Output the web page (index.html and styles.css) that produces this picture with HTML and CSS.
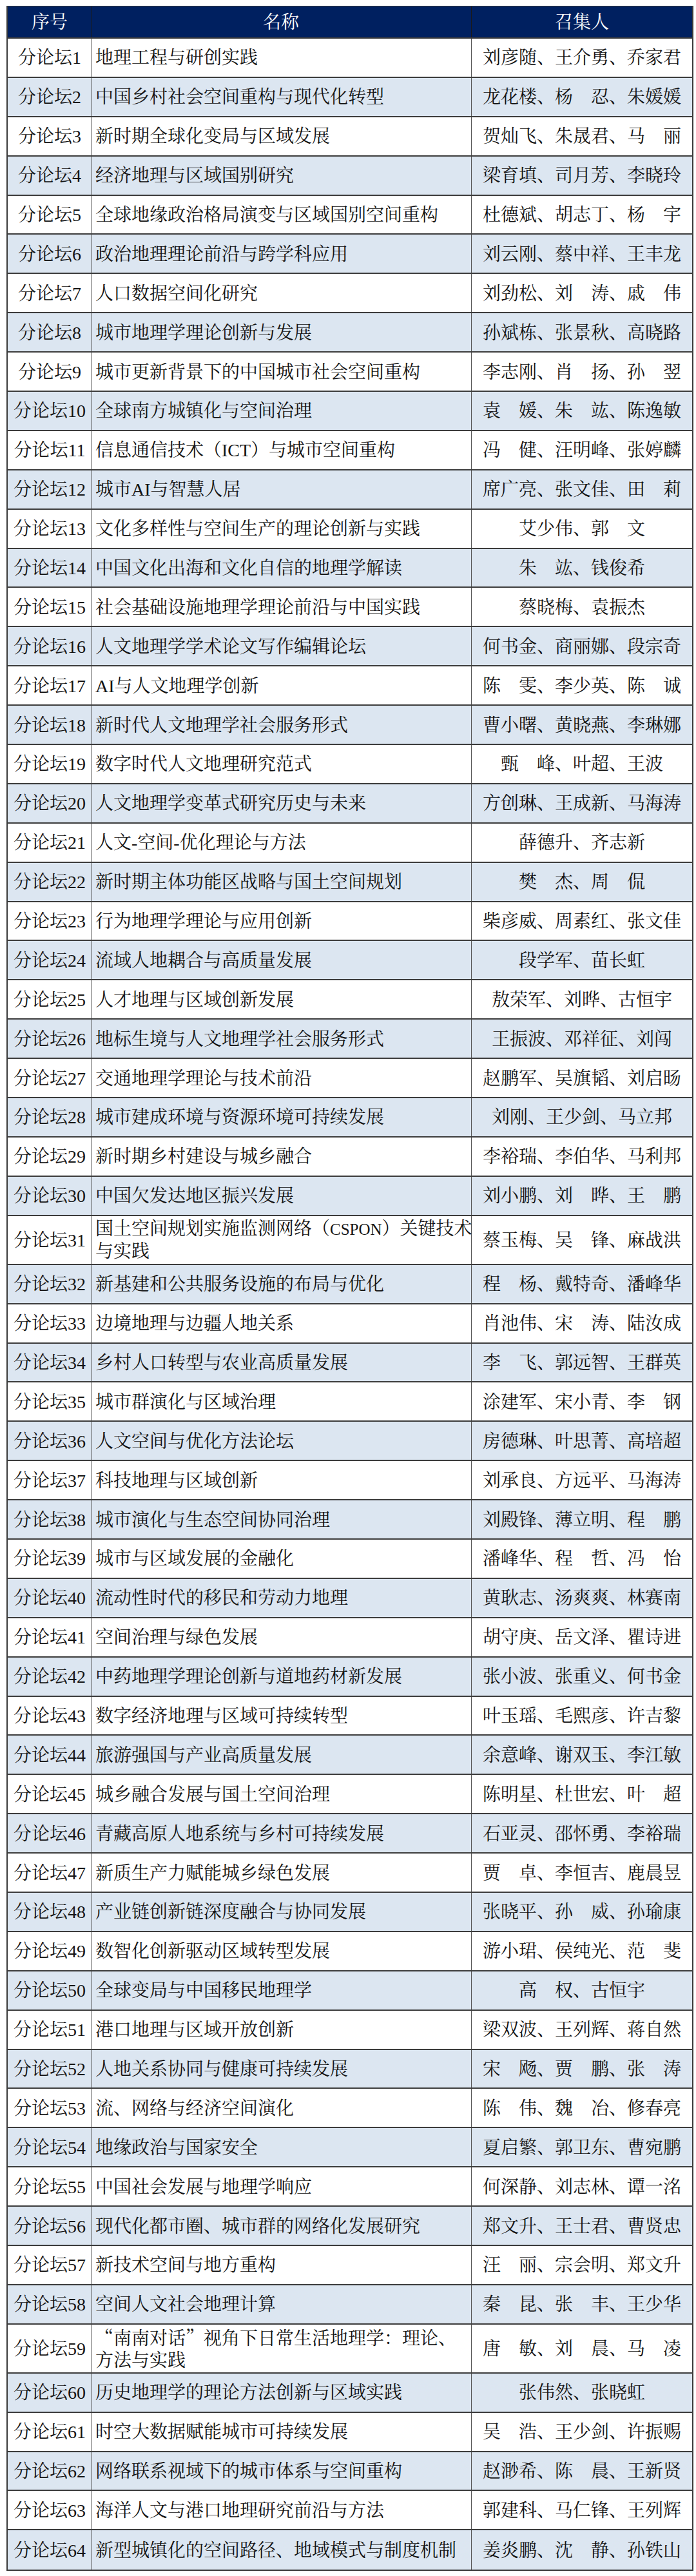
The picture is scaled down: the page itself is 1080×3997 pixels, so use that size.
FILE: index.html
```html
<!DOCTYPE html>
<html lang="zh-CN">
<head>
<meta charset="utf-8">
<title>分论坛列表</title>
<link rel="stylesheet" href="styles.css">
</head>
<body>
<div class="sheet">
  <div class="row head"><div class="c no">序号</div><div class="c name">名称</div><div class="c who">召集人</div></div>
  <div class="row"><div class="c no">分论坛1</div><div class="c name">地理工程与研创实践</div><div class="c who">刘彦随、王介勇、乔家君</div></div>
  <div class="row alt"><div class="c no">分论坛2</div><div class="c name">中国乡村社会空间重构与现代化转型</div><div class="c who">龙花楼、杨　忍、朱媛媛</div></div>
  <div class="row"><div class="c no">分论坛3</div><div class="c name">新时期全球化变局与区域发展</div><div class="c who">贺灿飞、朱晟君、马　丽</div></div>
  <div class="row alt"><div class="c no">分论坛4</div><div class="c name">经济地理与区域国别研究</div><div class="c who">梁育填、司月芳、李晓玲</div></div>
  <div class="row"><div class="c no">分论坛5</div><div class="c name">全球地缘政治格局演变与区域国别空间重构</div><div class="c who">杜德斌、胡志丁、杨　宇</div></div>
  <div class="row alt"><div class="c no">分论坛6</div><div class="c name">政治地理理论前沿与跨学科应用</div><div class="c who">刘云刚、蔡中祥、王丰龙</div></div>
  <div class="row"><div class="c no">分论坛7</div><div class="c name">人口数据空间化研究</div><div class="c who">刘劲松、刘　涛、戚　伟</div></div>
  <div class="row alt"><div class="c no">分论坛8</div><div class="c name">城市地理学理论创新与发展</div><div class="c who">孙斌栋、张景秋、高晓路</div></div>
  <div class="row"><div class="c no">分论坛9</div><div class="c name">城市更新背景下的中国城市社会空间重构</div><div class="c who">李志刚、肖　扬、孙　翌</div></div>
  <div class="row alt"><div class="c no">分论坛10</div><div class="c name">全球南方城镇化与空间治理</div><div class="c who">袁　媛、朱　竑、陈逸敏</div></div>
  <div class="row"><div class="c no">分论坛11</div><div class="c name">信息通信技术（ICT）与城市空间重构</div><div class="c who">冯　健、汪明峰、张婷麟</div></div>
  <div class="row alt"><div class="c no">分论坛12</div><div class="c name">城市AI与智慧人居</div><div class="c who">席广亮、张文佳、田　莉</div></div>
  <div class="row"><div class="c no">分论坛13</div><div class="c name">文化多样性与空间生产的理论创新与实践</div><div class="c who">艾少伟、郭　文</div></div>
  <div class="row alt"><div class="c no">分论坛14</div><div class="c name">中国文化出海和文化自信的地理学解读</div><div class="c who">朱　竑、钱俊希</div></div>
  <div class="row"><div class="c no">分论坛15</div><div class="c name">社会基础设施地理学理论前沿与中国实践</div><div class="c who">蔡晓梅、袁振杰</div></div>
  <div class="row alt"><div class="c no">分论坛16</div><div class="c name">人文地理学学术论文写作编辑论坛</div><div class="c who">何书金、商丽娜、段宗奇</div></div>
  <div class="row"><div class="c no">分论坛17</div><div class="c name">AI与人文地理学创新</div><div class="c who">陈　雯、李少英、陈　诚</div></div>
  <div class="row alt"><div class="c no">分论坛18</div><div class="c name">新时代人文地理学社会服务形式</div><div class="c who">曹小曙、黄晓燕、李琳娜</div></div>
  <div class="row"><div class="c no">分论坛19</div><div class="c name">数字时代人文地理研究范式</div><div class="c who">甄　峰、叶超、王波</div></div>
  <div class="row alt"><div class="c no">分论坛20</div><div class="c name">人文地理学变革式研究历史与未来</div><div class="c who">方创琳、王成新、马海涛</div></div>
  <div class="row"><div class="c no">分论坛21</div><div class="c name">人文-空间-优化理论与方法</div><div class="c who">薛德升、齐志新</div></div>
  <div class="row alt"><div class="c no">分论坛22</div><div class="c name">新时期主体功能区战略与国土空间规划</div><div class="c who">樊　杰、周　侃</div></div>
  <div class="row"><div class="c no">分论坛23</div><div class="c name">行为地理学理论与应用创新</div><div class="c who">柴彦威、周素红、张文佳</div></div>
  <div class="row alt"><div class="c no">分论坛24</div><div class="c name">流域人地耦合与高质量发展</div><div class="c who">段学军、苗长虹</div></div>
  <div class="row"><div class="c no">分论坛25</div><div class="c name">人才地理与区域创新发展</div><div class="c who">敖荣军、刘晔、古恒宇</div></div>
  <div class="row alt"><div class="c no">分论坛26</div><div class="c name">地标生境与人文地理学社会服务形式</div><div class="c who">王振波、邓祥征、刘闯</div></div>
  <div class="row"><div class="c no">分论坛27</div><div class="c name">交通地理学理论与技术前沿</div><div class="c who">赵鹏军、吴旗韬、刘启旸</div></div>
  <div class="row alt"><div class="c no">分论坛28</div><div class="c name">城市建成环境与资源环境可持续发展</div><div class="c who">刘刚、王少剑、马立邦</div></div>
  <div class="row"><div class="c no">分论坛29</div><div class="c name">新时期乡村建设与城乡融合</div><div class="c who">李裕瑞、李伯华、马利邦</div></div>
  <div class="row alt"><div class="c no">分论坛30</div><div class="c name">中国欠发达地区振兴发展</div><div class="c who">刘小鹏、刘　晔、王　鹏</div></div>
  <div class="row tall"><div class="c no">分论坛31</div><div class="c name"><div class="txt">国土空间规划实施监测网络（<span class="latin">CSPON</span>）关键技术<br>与实践</div></div><div class="c who">蔡玉梅、吴　锋、麻战洪</div></div>
  <div class="row alt"><div class="c no">分论坛32</div><div class="c name">新基建和公共服务设施的布局与优化</div><div class="c who">程　杨、戴特奇、潘峰华</div></div>
  <div class="row"><div class="c no">分论坛33</div><div class="c name">边境地理与边疆人地关系</div><div class="c who">肖池伟、宋　涛、陆汝成</div></div>
  <div class="row alt"><div class="c no">分论坛34</div><div class="c name">乡村人口转型与农业高质量发展</div><div class="c who">李　飞、郭远智、王群英</div></div>
  <div class="row"><div class="c no">分论坛35</div><div class="c name">城市群演化与区域治理</div><div class="c who">涂建军、宋小青、李　钢</div></div>
  <div class="row alt"><div class="c no">分论坛36</div><div class="c name">人文空间与优化方法论坛</div><div class="c who">房德琳、叶思菁、高培超</div></div>
  <div class="row"><div class="c no">分论坛37</div><div class="c name">科技地理与区域创新</div><div class="c who">刘承良、方远平、马海涛</div></div>
  <div class="row alt"><div class="c no">分论坛38</div><div class="c name">城市演化与生态空间协同治理</div><div class="c who">刘殿锋、薄立明、程　鹏</div></div>
  <div class="row"><div class="c no">分论坛39</div><div class="c name">城市与区域发展的金融化</div><div class="c who">潘峰华、程　哲、冯　怡</div></div>
  <div class="row alt"><div class="c no">分论坛40</div><div class="c name">流动性时代的移民和劳动力地理</div><div class="c who">黄耿志、汤爽爽、林赛南</div></div>
  <div class="row"><div class="c no">分论坛41</div><div class="c name">空间治理与绿色发展</div><div class="c who">胡守庚、岳文泽、瞿诗进</div></div>
  <div class="row alt"><div class="c no">分论坛42</div><div class="c name">中药地理学理论创新与道地药材新发展</div><div class="c who">张小波、张重义、何书金</div></div>
  <div class="row"><div class="c no">分论坛43</div><div class="c name">数字经济地理与区域可持续转型</div><div class="c who">叶玉瑶、毛熙彦、许吉黎</div></div>
  <div class="row alt"><div class="c no">分论坛44</div><div class="c name">旅游强国与产业高质量发展</div><div class="c who">余意峰、谢双玉、李江敏</div></div>
  <div class="row"><div class="c no">分论坛45</div><div class="c name">城乡融合发展与国土空间治理</div><div class="c who">陈明星、杜世宏、叶　超</div></div>
  <div class="row alt"><div class="c no">分论坛46</div><div class="c name">青藏高原人地系统与乡村可持续发展</div><div class="c who">石亚灵、邵怀勇、李裕瑞</div></div>
  <div class="row"><div class="c no">分论坛47</div><div class="c name">新质生产力赋能城乡绿色发展</div><div class="c who">贾　卓、李恒吉、鹿晨昱</div></div>
  <div class="row alt"><div class="c no">分论坛48</div><div class="c name">产业链创新链深度融合与协同发展</div><div class="c who">张晓平、孙　威、孙瑜康</div></div>
  <div class="row"><div class="c no">分论坛49</div><div class="c name">数智化创新驱动区域转型发展</div><div class="c who">游小珺、侯纯光、范　斐</div></div>
  <div class="row alt"><div class="c no">分论坛50</div><div class="c name">全球变局与中国移民地理学</div><div class="c who">高　权、古恒宇</div></div>
  <div class="row"><div class="c no">分论坛51</div><div class="c name">港口地理与区域开放创新</div><div class="c who">梁双波、王列辉、蒋自然</div></div>
  <div class="row alt"><div class="c no">分论坛52</div><div class="c name">人地关系协同与健康可持续发展</div><div class="c who">宋　飏、贾　鹏、张　涛</div></div>
  <div class="row"><div class="c no">分论坛53</div><div class="c name">流、网络与经济空间演化</div><div class="c who">陈　伟、魏　冶、修春亮</div></div>
  <div class="row alt"><div class="c no">分论坛54</div><div class="c name">地缘政治与国家安全</div><div class="c who">夏启繁、郭卫东、曹宛鹏</div></div>
  <div class="row"><div class="c no">分论坛55</div><div class="c name">中国社会发展与地理学响应</div><div class="c who">何深静、刘志林、谭一洺</div></div>
  <div class="row alt"><div class="c no">分论坛56</div><div class="c name">现代化都市圈、城市群的网络化发展研究</div><div class="c who">郑文升、王士君、曹贤忠</div></div>
  <div class="row"><div class="c no">分论坛57</div><div class="c name">新技术空间与地方重构</div><div class="c who">汪　丽、宗会明、郑文升</div></div>
  <div class="row alt"><div class="c no">分论坛58</div><div class="c name">空间人文社会地理计算</div><div class="c who">秦　昆、张　丰、王少华</div></div>
  <div class="row tall"><div class="c no">分论坛59</div><div class="c name"><div class="txt"><span class="cjk">“</span>南南对话<span class="cjk">”</span>视角下日常生活地理学：理论、<br>方法与实践</div></div><div class="c who">唐　敏、刘　晨、马　凌</div></div>
  <div class="row alt"><div class="c no">分论坛60</div><div class="c name">历史地理学的理论方法创新与区域实践</div><div class="c who">张伟然、张晓虹</div></div>
  <div class="row"><div class="c no">分论坛61</div><div class="c name">时空大数据赋能城市可持续发展</div><div class="c who">吴　浩、王少剑、许振赐</div></div>
  <div class="row alt"><div class="c no">分论坛62</div><div class="c name">网络联系视域下的城市体系与空间重构</div><div class="c who">赵渺希、陈　晨、王新贤</div></div>
  <div class="row"><div class="c no">分论坛63</div><div class="c name">海洋人文与港口地理研究前沿与方法</div><div class="c who">郭建科、马仁锋、王列辉</div></div>
  <div class="row alt last"><div class="c no">分论坛64</div><div class="c name">新型城镇化的空间路径、地域模式与制度机制</div><div class="c who">姜炎鹏、沈　静、孙铁山</div></div>
</div>
</body>
</html>
```
FILE: styles.css
```css
html, body {
  margin: 0;
  padding: 0;
  background: #ffffff;
}

body {
  font-family: "Liberation Serif", "Noto Serif CJK SC", "Noto Sans CJK SC", serif;
  font-size: 28px;
  color: #141414;
}

.sheet {
  margin: 9px 0 0 10px;
  width: 1066px;
  border: 2px solid #3a3a3a;
  border-top-width: 1px;
  box-sizing: border-box;
}

.row {
  display: grid;
  grid-template-columns: 131px 589px 1fr;
  height: 60.9px;
  border-bottom: 2px solid #3c3c3c;
  box-sizing: border-box;
  background: #ffffff;
}

.row.alt {
  background: #dce6f1;
}

.row.tall {
  height: 76px;
}

.row.last {
  border-bottom: none;
}

.row.head {
  height: 50px;
  background: #002060;
  color: #ffffff;
}

.c {
  display: flex;
  align-items: center;
  box-sizing: border-box;
  line-height: 34px;
  padding-top: 2px;
}

.c.no {
  justify-content: center;
  border-right: 1px solid #555555;
  white-space: nowrap;
}

.c.name {
  padding-left: 5px;
  padding-right: 2px;
  border-right: 1px solid #555555;
}

.c.who {
  justify-content: center;
  white-space: nowrap;
}

.head .c {
  justify-content: center;
  padding-left: 0;
  border-right-color: #1a1a1a;
}

.txt {
  white-space: nowrap;
}

.latin {
  font-size: 25px;
}

.cjk {
  font-family: "Noto Serif CJK SC", "Noto Sans CJK SC", serif;
}
```
